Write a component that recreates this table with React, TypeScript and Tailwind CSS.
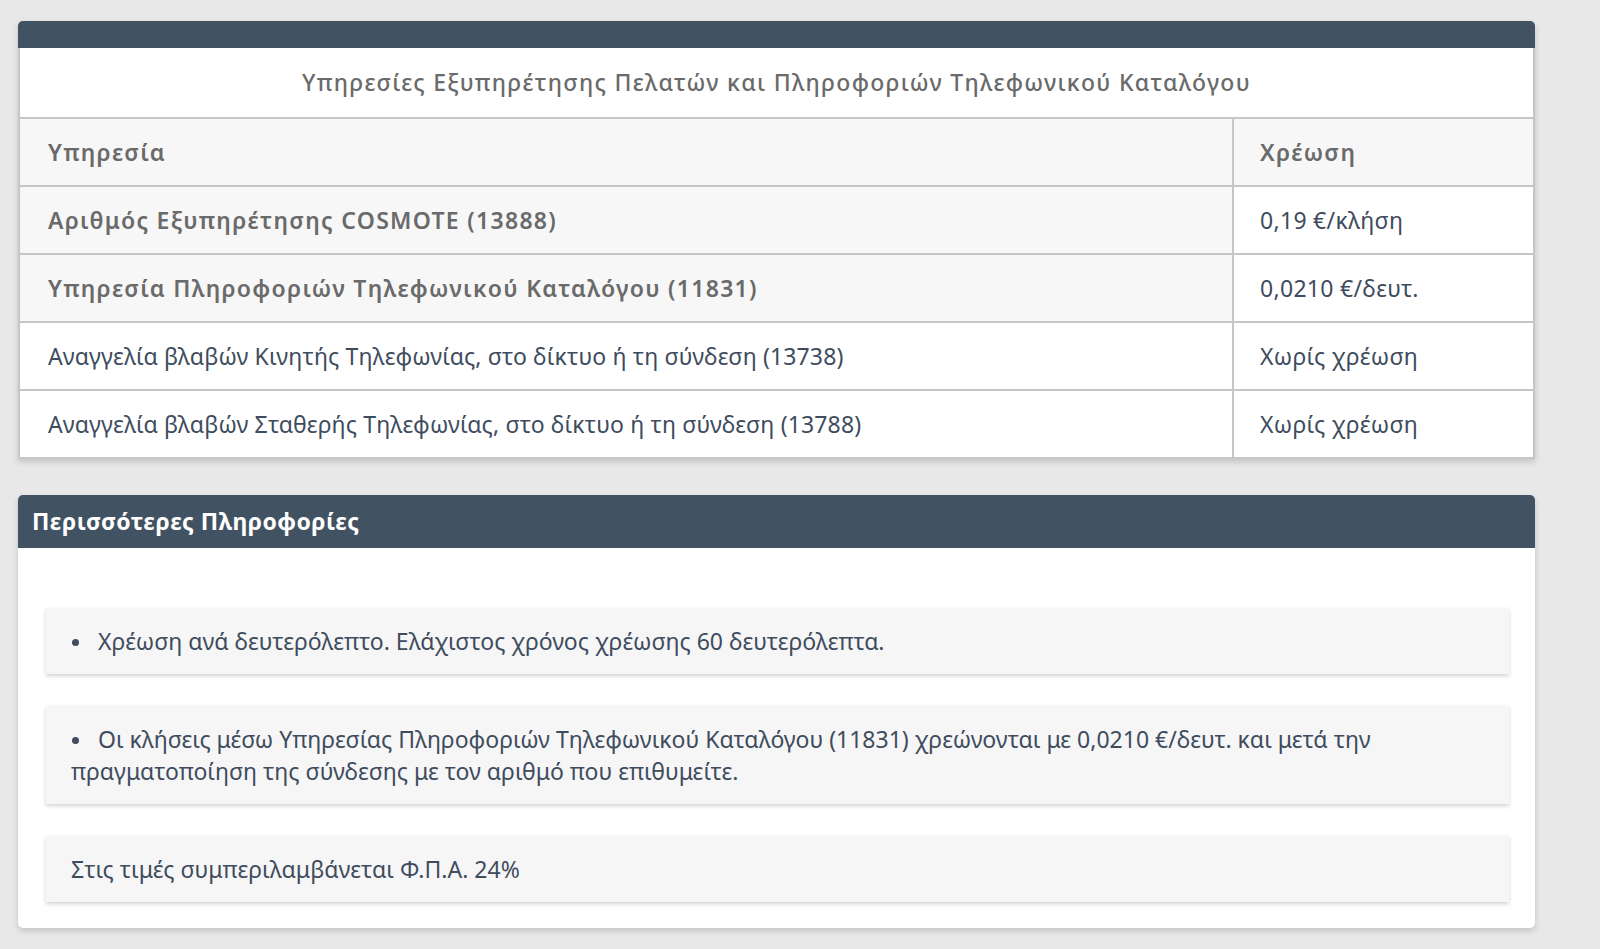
const rows = [
    { service: 'Αριθμός Εξυπηρέτησης COSMOTE (13888)', price: '0,19 €/κλήση', strong: true },
    { service: 'Υπηρεσία Πληροφοριών Τηλεφωνικού Καταλόγου (11831)', price: '0,0210 €/δευτ.', strong: true },
    { service: 'Αναγγελία βλαβών Κινητής Τηλεφωνίας, στο δίκτυο ή τη σύνδεση (13738)', price: 'Χωρίς χρέωση', strong: false },
    { service: 'Αναγγελία βλαβών Σταθερής Τηλεφωνίας, στο δίκτυο ή τη σύνδεση (13788)', price: 'Χωρίς χρέωση', strong: false },
];

function InfoBox({ children }: { children: React.ReactNode }) {
    return (
        <div className="bg-[#f6f6f6] pl-[25px] pr-6 py-[17px] text-[23px] leading-[32px] text-[#3e4c5e] shadow-[0_2px_4px_rgba(0,0,0,0.18)]">
            {children}
        </div>
    );
}

function Bullet() {
    return <span className="mb-[3px] ml-[1px] mr-[19px] inline-block h-[7px] w-[7px] rounded-full bg-[#3e4c5e] align-middle"></span>;
}

export default function App() {
    return (
        <div
            className="min-h-screen bg-[#e8e8e8] pl-[18px] pt-[21px] pb-[21px]"
            style={{ fontFamily: '"Noto Sans", "DejaVu Sans", sans-serif' }}
        >
            <div className="w-[1517px]">
                {/* Pricing table */}
                <div className="overflow-hidden rounded-t-[5px] shadow-[0_3px_6px_rgba(0,0,0,0.16)]">
                    <div className="h-[27px] bg-[#415263]"></div>
                    <div className="border-x-2 border-b-2 border-[#c6c6c6] bg-white">
                        <div className="flex h-[69px] items-center justify-center text-[23px] font-medium tracking-[1.3px] text-[#6a6a6a]">
                            Υπηρεσίες Εξυπηρέτησης Πελατών και Πληροφοριών Τηλεφωνικού Καταλόγου
                        </div>
                        <div className="flex h-[68px] border-t-2 border-[#c6c6c6] bg-[#f7f7f7] text-[23px] font-semibold tracking-[1.3px] text-[#6a6a6a]">
                            <div className="flex w-[1214px] items-center border-r-2 border-[#c6c6c6] px-[28px]">Υπηρεσία</div>
                            <div className="flex flex-1 items-center px-[26px]">Χρέωση</div>
                        </div>
                        {rows.map((row) => (
                            <div key={row.service} className="flex h-[68px] border-t-2 border-[#c6c6c6] text-[23px]">
                                <div
                                    className={
                                        row.strong
                                            ? 'flex w-[1214px] items-center border-r-2 border-[#c6c6c6] bg-[#f7f7f7] px-[28px] font-semibold tracking-[1.3px] text-[#6a6a6a]'
                                            : 'flex w-[1214px] items-center border-r-2 border-[#c6c6c6] bg-white px-[28px] tracking-[0.15px] text-[#3e4c5e]'
                                    }
                                >
                                    {row.service}
                                </div>
                                <div className="flex flex-1 items-center bg-white px-[26px] tracking-[0.3px] text-[#3e4c5e]">{row.price}</div>
                            </div>
                        ))}
                    </div>
                </div>

                {/* More info */}
                <div className="mt-[36px] overflow-hidden rounded-[5px] bg-white shadow-[0_3px_6px_rgba(0,0,0,0.16)]">
                    <div className="flex h-[53px] items-center bg-[#415263] px-[14px] text-[23px] font-bold tracking-[0.5px] text-white">
                        Περισσότερες Πληροφορίες
                    </div>
                    <div className="flex flex-col gap-[32px] pl-[28px] pr-[26px] pt-[60px] pb-[26px]">
                        <InfoBox>
                            <Bullet />Χρέωση ανά δευτερόλεπτο. Ελάχιστος χρόνος χρέωσης 60 δευτερόλεπτα.
                        </InfoBox>
                        <InfoBox>
                            <Bullet />Οι κλήσεις μέσω Υπηρεσίας Πληροφοριών Τηλεφωνικού Καταλόγου (11831) χρεώνονται με 0,0210 €/δευτ. και μετά την πραγματοποίηση της σύνδεσης με τον αριθμό που επιθυμείτε.
                        </InfoBox>
                        <InfoBox>Στις τιμές συμπεριλαμβάνεται Φ.Π.Α. 24%</InfoBox>
                    </div>
                </div>
            </div>
        </div>
    );
}
